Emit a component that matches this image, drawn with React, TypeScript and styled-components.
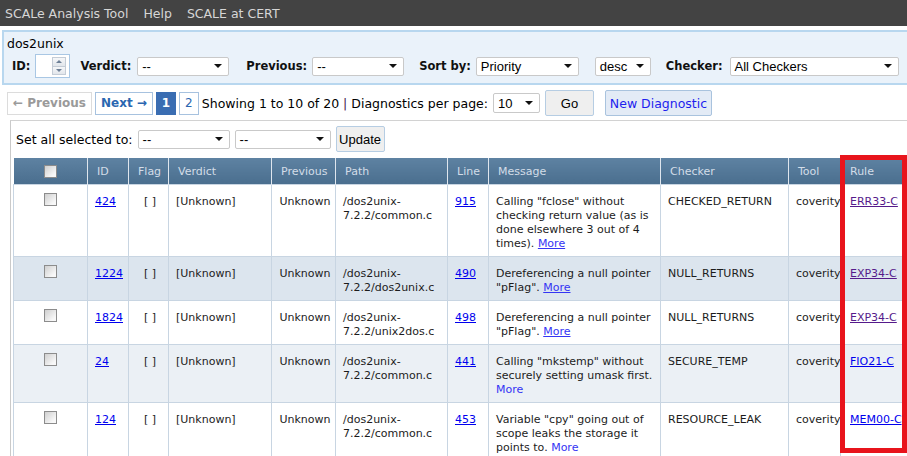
import styled, { createGlobalStyle } from 'styled-components';

const GlobalStyle = createGlobalStyle`
  html, body {
    margin: 0;
    padding: 0;
    overflow: hidden;
    background: #fff;
    font-family: "DejaVu Sans", Verdana, sans-serif;
    font-size: 12.5px;
    color: #000;
  }
`;

type Row = {
  id: string;
  path: [string, string];
  line: string;
  msg: string;
  more: boolean; // underline on the More link
  checker: string;
  rule: string;
  visited: boolean;
  bg: string;
};

const rows: Row[] = [
  { id: '424', path: ['/dos2unix-', '7.2.2/common.c'], line: '915', msg: 'Calling "fclose" without checking return value (as is done elsewhere 3 out of 4 times).', more: true, checker: 'CHECKED_RETURN', rule: 'ERR33-C', visited: true, bg: '#fff' },
  { id: '1224', path: ['/dos2unix-', '7.2.2/dos2unix.c'], line: '490', msg: 'Dereferencing a null pointer "pFlag".', more: true, checker: 'NULL_RETURNS', rule: 'EXP34-C', visited: true, bg: '#dce5ee' },
  { id: '1824', path: ['/dos2unix-', '7.2.2/unix2dos.c'], line: '498', msg: 'Dereferencing a null pointer "pFlag".', more: true, checker: 'NULL_RETURNS', rule: 'EXP34-C', visited: true, bg: '#fff' },
  { id: '24', path: ['/dos2unix-', '7.2.2/common.c'], line: '441', msg: 'Calling "mkstemp" without securely setting umask first.', more: false, checker: 'SECURE_TEMP', rule: 'FIO21-C', visited: false, bg: '#ebf0f5' },
  { id: '124', path: ['/dos2unix-', '7.2.2/common.c'], line: '453', msg: 'Variable "cpy" going out of scope leaks the storage it points to.', more: false, checker: 'RESOURCE_LEAK', rule: 'MEM00-C', visited: false, bg: '#fff' },
];

const columns = [
  { label: '', w: 74 },
  { label: 'ID', w: 41 },
  { label: 'Flag', w: 40 },
  { label: 'Verdict', w: 103 },
  { label: 'Previous', w: 64 },
  { label: 'Path', w: 112 },
  { label: 'Line', w: 41 },
  { label: 'Message', w: 172 },
  { label: 'Checker', w: 128 },
  { label: 'Tool', w: 52 },
  { label: 'Rule', w: 67 },
];

function Select({ value, w, h = 19 }: { value: string; w: number; h?: number }) {
  return (
    <SelectBox $w={w} $h={h}>
      <span>{value}</span>
      <Caret />
    </SelectBox>
  );
}

export default function App() {
  return (
    <Page>
      <GlobalStyle />

      <TopBar>
        <NavItem>SCALe Analysis Tool</NavItem>
        <NavItem>Help</NavItem>
        <NavItem>SCALE at CERT</NavItem>
      </TopBar>

      <FilterPanel>
        <ProjectName>dos2unix</ProjectName>
        <FilterRow>
          <Field $mr={10}>
            <FieldLabel>ID:</FieldLabel>
            <Spinner>
              <SpinButtons>
                <SpinHalf><SpinArrow $up /></SpinHalf>
                <SpinHalf><SpinArrow /></SpinHalf>
              </SpinButtons>
            </Spinner>
          </Field>
          <Field $mr={17} $gap={6}>
            <FieldLabel>Verdict:</FieldLabel>
            <Select value="--" w={92} />
          </Field>
          <Field $mr={15}>
            <FieldLabel>Previous:</FieldLabel>
            <Select value="--" w={92} />
          </Field>
          <Field $mr={16}>
            <FieldLabel>Sort by:</FieldLabel>
            <Select value="Priority" w={103} />
          </Field>
          <Field $mr={15}>
            <Select value="desc" w={56} />
          </Field>
          <Field $mr={0} $gap={7}>
            <FieldLabel>Checker:</FieldLabel>
            <Select value="All Checkers" w={169} />
          </Field>
        </FilterRow>
      </FilterPanel>

      <PagerRow>
        <PagerButton $disabled>&larr; Previous</PagerButton>
        <PagerButton>Next &rarr;</PagerButton>
        <PageNum $active>1</PageNum>
        <PageNum>2</PageNum>
        <PagerText>
          Showing 1 to 10 of 20 <Pipe>|</Pipe> Diagnostics per page:
        </PagerText>
        <Select value="10" w={47} h={20} />
        <GrayButton $w={49}>Go</GrayButton>
        <NewButton>New Diagnostic</NewButton>
      </PagerRow>

      <ResultsBox>
        <BulkBar>
          <span>Set all selected to:</span>
          <Select value="--" w={92} />
          <Select value="--" w={96} />
          <GrayButton $w={49}>Update</GrayButton>
        </BulkBar>

        <Table>
          <colgroup>
            {columns.map((c, i) => (
              <col key={i} style={{ width: c.w }} />
            ))}
          </colgroup>
          <thead>
            <tr>
              {columns.map((c, i) => (
                <Th key={i} $center={i === 0}>
                  {i === 0 ? <Check /> : c.label}
                </Th>
              ))}
            </tr>
          </thead>
          <tbody>
            {rows.map((r) => (
              <Tr key={r.id} $bg={r.bg}>
                <Td $center><Check $body /></Td>
                <Td><IdLink>{r.id}</IdLink></Td>
                <Td $center>[ ]</Td>
                <Td>[Unknown]</Td>
                <Td $center>Unknown</Td>
                <Td>{r.path[0]}<br />{r.path[1]}</Td>
                <Td><IdLink>{r.line}</IdLink></Td>
                <Td>
                  {r.msg} <MoreLink $underline={r.more}>More</MoreLink>
                </Td>
                <Td>{r.checker}</Td>
                <Td $pr={2}>coverity</Td>
                <Td $pl={9}><RuleLink $visited={r.visited}>{r.rule}</RuleLink></Td>
              </Tr>
            ))}
          </tbody>
        </Table>
      </ResultsBox>

      <Highlight />
    </Page>
  );
}

const Page = styled.div`
  position: relative;
  width: 907px;
  height: 456px;
  overflow: hidden;
`;

const TopBar = styled.div`
  display: flex;
  align-items: center;
  gap: 15px;
  height: 26px;
  padding-left: 5px;
  background: #434343;
`;

const NavItem = styled.span`
  color: #d6d6d6;
  font-size: 12.5px;
`;

const FilterPanel = styled.div`
  margin: 4px 0 0 2px;
  padding: 3px 0 5px 3px;
  border: 2px solid #b8d7ef;
  border-right: none;
  background: #eaf2fa;
`;

const ProjectName = styled.div`
  height: 18px;
  line-height: 18px;
  margin-bottom: 1px;
`;

const FilterRow = styled.div`
  display: flex;
  align-items: center;
  height: 24px;
  padding-left: 5px;
`;

const Field = styled.div<{ $mr: number; $gap?: number }>`
  display: flex;
  align-items: center;
  gap: ${(p) => p.$gap ?? 5}px;
  margin-right: ${(p) => p.$mr}px;
`;

const FieldLabel = styled.span`
  font-weight: bold;
  font-size: 11.5px;
  color: #111;
  white-space: nowrap;
`;

const SelectBox = styled.div<{ $w: number; $h: number }>`
  display: flex;
  flex-shrink: 0;
  align-items: center;
  box-sizing: border-box;
  width: ${(p) => p.$w}px;
  height: ${(p) => p.$h}px;
  padding-left: 4px;
  border: 1px solid #c9c9c9;
  border-radius: 2px;
  background: #fff;
  font-family: "Liberation Sans", Arial, sans-serif;
  font-size: 13px;
  color: #000;
  white-space: nowrap;
`;

const Caret = styled.span`
  margin-left: auto;
  margin-right: 6px;
  width: 0;
  height: 0;
  border-left: 4px solid transparent;
  border-right: 4px solid transparent;
  border-top: 4px solid #111;
`;

const Spinner = styled.div`
  display: flex;
  justify-content: flex-end;
  align-items: center;
  box-sizing: border-box;
  width: 35px;
  height: 24px;
  padding-right: 3px;
  border: 1px solid #a9c7e4;
  background: #fff;
`;

const SpinButtons = styled.div`
  display: flex;
  flex-direction: column;
  width: 14px;
  height: 18px;
`;

const SpinHalf = styled.div`
  flex: 1;
  display: flex;
  align-items: center;
  justify-content: center;
  border: 1px solid #c4ccd6;
  background: linear-gradient(#f6f7f9, #e2e6eb);
  & + & {
    border-top: none;
  }
`;

const SpinArrow = styled.span<{ $up?: boolean }>`
  width: 0;
  height: 0;
  border-left: 3px solid transparent;
  border-right: 3px solid transparent;
  ${(p) => (p.$up ? 'border-bottom: 3px solid #6d7f96;' : 'border-top: 3px solid #6d7f96;')}
`;

const PagerRow = styled.div`
  display: flex;
  align-items: center;
  height: 26px;
  margin: 5px 0 0 7px;
`;

const PagerButton = styled.div<{ $disabled?: boolean }>`
  display: flex;
  align-items: center;
  justify-content: center;
  box-sizing: border-box;
  height: 23px;
  padding: 0 5px;
  margin-right: 3px;
  border: 1px solid ${(p) => (p.$disabled ? '#dcdcdc' : '#a7c2df')};
  background: #fff;
  color: ${(p) => (p.$disabled ? '#9a9a9a' : '#2a66b0')};
  font-weight: bold;
  font-size: 12px;
`;

const PageNum = styled.div<{ $active?: boolean }>`
  display: flex;
  align-items: center;
  justify-content: center;
  box-sizing: border-box;
  width: 20px;
  height: 23px;
  margin-right: 3px;
  border: 1px solid ${(p) => (p.$active ? '#3a6db2' : '#a7c2df')};
  background: ${(p) => (p.$active ? '#3a6db2' : '#fff')};
  color: ${(p) => (p.$active ? '#fff' : '#2a66b0')};
  font-weight: ${(p) => (p.$active ? 'bold' : 'normal')};
  font-size: 12px;
`;

const PagerText = styled.span`
  margin-right: 5px;
  white-space: nowrap;
`;

const Pipe = styled.span`
  color: #3d2050;
`;

const GrayButton = styled.div<{ $w: number }>`
  display: flex;
  align-items: center;
  justify-content: center;
  box-sizing: border-box;
  width: ${(p) => p.$w}px;
  height: 26px;
  margin-left: 5px;
  border: 1px solid #b6cde3;
  border-radius: 2px;
  background: #efefef;
  font-family: "Liberation Sans", Arial, sans-serif;
  font-size: 13px;
  color: #000;
`;

const NewButton = styled.div`
  display: flex;
  align-items: center;
  justify-content: center;
  box-sizing: border-box;
  width: 107px;
  height: 26px;
  margin-left: 11px;
  border: 1px solid #a9c3de;
  border-radius: 2px;
  background: #e3ebf6;
  color: #1e1eee;
`;

const ResultsBox = styled.div`
  margin: 4px 0 0 10px;
  border-top: 1px solid #d2d2d2;
  border-left: 1px solid #cacaca;
`;

const BulkBar = styled.div`
  display: flex;
  align-items: center;
  gap: 5px;
  height: 26px;
  padding: 5px 0 6px 5px;

  & > ${GrayButton} {
    margin-left: 0;
  }
`;

const Table = styled.table`
  table-layout: fixed;
  width: 894px;
  margin-left: 2px;
  border-collapse: collapse;
  font-size: 11px;
  color: #1c1c1c;
`;

const Th = styled.th<{ $center?: boolean }>`
  height: 26px;
  padding: 0 9px;
  border-left: 1px solid #dfe6ee;
  background: linear-gradient(#5e82a2, #4a6e8e);
  color: #d3dde8;
  font-weight: normal;
  text-align: ${(p) => (p.$center ? 'center' : 'left')};
  vertical-align: middle;
  white-space: nowrap;
  &:first-child {
    border-left: none;
  }
`;

const Tr = styled.tr<{ $bg: string }>`
  background: ${(p) => p.$bg};
`;

const Td = styled.td<{ $center?: boolean; $pl?: number; $pr?: number }>`
  padding: 10px ${(p) => p.$pr ?? 4}px 5px ${(p) => p.$pl ?? 7}px;
  border: 1px solid #c8d5e2;
  line-height: 14px;
  vertical-align: top;
  text-align: ${(p) => (p.$center ? 'center' : 'left')};
  white-space: ${(p) => (p.$center ? 'nowrap' : 'normal')};
`;

const Check = styled.span<{ $body?: boolean }>`
  display: inline-block;
  box-sizing: border-box;
  width: 13px;
  height: 13px;
  margin-top: ${(p) => (p.$body ? '-2px' : '1px')};
  margin-right: ${(p) => (p.$body ? '4px' : '0')};
  vertical-align: top;
  border: 1px solid #8c8c8c;
  background: linear-gradient(135deg, #cfcfcf, #f8f8f8 80%);
`;

const IdLink = styled.a`
  color: #0000ee;
  text-decoration: underline;
`;

const MoreLink = styled.a<{ $underline: boolean }>`
  color: #3434f4;
  text-decoration: ${(p) => (p.$underline ? 'underline' : 'none')};
`;

const RuleLink = styled.a<{ $visited: boolean }>`
  color: ${(p) => (p.$visited ? '#551a8b' : '#0000ee')};
  text-decoration: underline;
  white-space: nowrap;
`;

// annotation drawn over the screenshot: red frame around the Rule column
const Highlight = styled.div`
  position: absolute;
  left: 840px;
  top: 155px;
  width: 67px;
  height: 298px;
  box-sizing: border-box;
  border: 5px solid #e8141c;
  pointer-events: none;
`;
